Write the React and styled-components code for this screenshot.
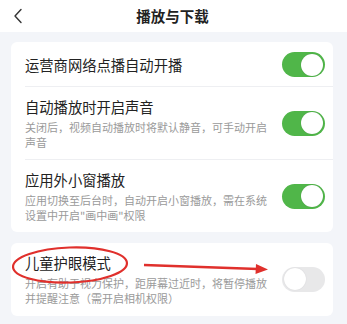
import styled, { createGlobalStyle } from "styled-components"

const GlobalStyle = createGlobalStyle`
    html, body {
        margin: 0;
        padding: 0;
        background: #f3f5f9;
        font-family: "Noto Sans CJK SC", "Noto Sans", sans-serif;
    }
`

const settings = [
    { title: '运营商网络点播自动开播', on: true },
    { title: '自动播放时开启声音', desc: '关闭后，视频自动播放时将默认静音，可手动开启声音', on: true },
    { title: '应用外小窗播放', desc: '应用切换至后台时，自动开启小窗播放，需在系统设置中开启"画中画"权限', on: true },
]

function Toggle({ on }) {
    return (
        <Track on={on ? 1 : 0}>
            <Knob on={on ? 1 : 0} />
        </Track>
    )
}

function Row({ item, last }) {
    return (
        <RowWrap last={last ? 1 : 0} hasDesc={item.desc ? 1 : 0}>
            <TextCol>
                <Title>{item.title}</Title>
                {item.desc && <Desc>{item.desc}</Desc>}
            </TextCol>
            <Toggle on={item.on} />
        </RowWrap>
    )
}

export default function App() {
    return (
        <Page>
            <GlobalStyle />
            <Header>
                <Back viewBox="0 0 10 16">
                    <path d="M8 1.5 L2 8 L8 14.5" fill="none" stroke="#333" strokeWidth="1.4" strokeLinecap="round" strokeLinejoin="round" />
                </Back>
                <HeaderTitle>播放与下载</HeaderTitle>
            </Header>
            <Body>
                <Card>
                    {settings.map((s, i) =>
                        <Row key={i} item={s} last={i === settings.length - 1} />
                    )}
                </Card>
                <Card>
                    <RowWrap last={1} hasDesc={1} eye={1}>
                        <TextCol>
                            <Title>儿童护眼模式</Title>
                            <Desc>开启有助于视力保护，距屏幕过近时，将暂停播放并提醒注意（需开启相机权限）</Desc>
                        </TextCol>
                        <Faded>
                            <Toggle on={false} />
                        </Faded>
                    </RowWrap>
                </Card>
            </Body>
            <Marks viewBox="0 0 347 324">
                <ellipse cx="70" cy="265" rx="57" ry="17.5" fill="none" stroke="#e0302c" strokeWidth="2.2" transform="rotate(-2 70 265)" />
                <path d="M144 265 L258 269" stroke="#e0302c" strokeWidth="2.4" fill="none" />
                <path d="M256 264 L268 269.5 L255.5 274 Z" fill="#e0302c" />
            </Marks>
        </Page>
    )
}

const Page = styled.div`
    width: 347px;
    height: 324px;
    position: relative;
    overflow: hidden;
    background: #f3f5f9;
`

const Header = styled.div`
    height: 32px;
    background: #ffffff;
    display: flex;
    align-items: center;
    justify-content: center;
    position: relative;
`

const Back = styled.svg`
    position: absolute;
    left: 13px;
    top: 8px;
    width: 10px;
    height: 16px;
`

const HeaderTitle = styled.div`
    font-size: 14.5px;
    font-weight: 700;
    color: #222;
    margin-left: -2px;
    margin-top: -2px;
`

const Body = styled.div`
    padding: 10px 14px 0 11px;
    display: flex;
    flex-direction: column;
    gap: 11px;
`

const Card = styled.div`
    background: #ffffff;
    border-radius: 6px;
    padding-left: 14px;
`

const RowWrap = styled.div`
    display: flex;
    align-items: center;
    justify-content: space-between;
    padding: ${p => p.hasDesc ? '10px 8px 10px 0' : '10px 8px 9px 0'};
    padding-bottom: ${p => p.eye ? '11px' : ''};
    border-bottom: ${p => p.last ? 'none' : '1px solid #eeeff2'};
`

const TextCol = styled.div`
    display: flex;
    flex-direction: column;
    gap: 3px;
`

const Title = styled.div`
    font-size: 14.3px;
    line-height: 20px;
    color: #222;
`

const Desc = styled.div`
    width: 248px;
    font-size: 11px;
    line-height: 14.5px;
    color: #9a9a9a;
`

const Track = styled.div`
    width: 43px;
    height: 25px;
    border-radius: 13px;
    background: ${p => p.on ? '#50b649' : '#d9d9dc'};
    position: relative;
    flex-shrink: 0;
`

const Knob = styled.div`
    position: absolute;
    top: 1.5px;
    left: ${p => p.on ? '19px' : '2px'};
    width: 22px;
    height: 22px;
    border-radius: 50%;
    background: #ffffff;
    box-shadow: 0 0 1px rgba(0, 0, 0, 0.25);
`

const Faded = styled.div`
    opacity: 0.6;
`

const Marks = styled.svg`
    position: absolute;
    left: 0;
    top: 0;
    width: 347px;
    height: 324px;
    pointer-events: none;
`
